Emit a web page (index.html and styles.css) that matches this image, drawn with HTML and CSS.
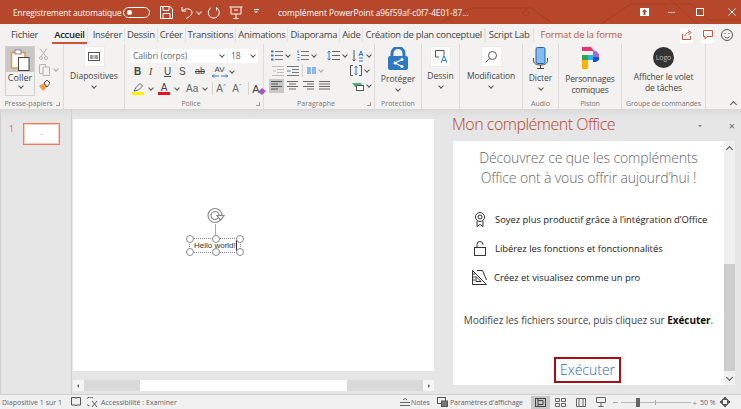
FILE: index.html
```html
<!DOCTYPE html>
<html lang="fr">
<head>
    <meta charset="UTF-8">
    <title>PowerPoint</title>
    <link rel="stylesheet" href="styles.css">
</head>
<body>

<div class="window">

<!-- Title bar -->
<div class="titlebar">
    <svg class="title-decor" width="300" height="24" fill="none" stroke="#a33e24" stroke-width="1"><path d="M0 22 L30 8 H90 L110 22 M85 10 a3 3 0 1 0 .1 0 M160 24 L190 4 H250 L268 20 H300 M230 0 L256 24"/></svg>
    <span class="autosave">Enregistrement automatique</span>
    <span class="toggle"><i></i></span>
    <svg class="qa qa-save" width="13" height="13" fill="none" stroke="#fff"><path d="M.5.5H10L12.5 3V12.5H.5Z M3 .5V4.5H9V.5 M3 12.5V7.5H10V12.5"/></svg>
    <svg class="qa qa-undo" width="12" height="13" fill="none" stroke="#fff"><path d="M1 1V5H5 M1 5C4 2 10 2 11 6C11.500 9 8 11 5 12.500"/></svg>
    <span class="qa-chev"></span>
    <svg class="qa qa-redo" width="13" height="13" fill="none" stroke="#fff"><path d="M4 1.800A5.500 5.500 0 1 0 9.500 1.800M9.500 1V4.500"/></svg>
    <svg class="qa qa-show" width="14" height="13" fill="none" stroke="#fff"><path d="M.5 1H13.500 M2 1V8H12V1 M7 8V12 M4.500 12.500H9.500 M5 4H9"/></svg>
    <span class="qa-more"></span>
    <span class="doc-name">complément PowerPoint a96f59af-c0f7-4E01-87...</span>
    <div class="win-btns">
        <svg width="9" height="8"><rect width="9" height="8" fill="#fff"/><path d="M4.500 1L7 4H5.500V7H3.500V4H2Z" fill="#b7472a"/></svg>
        <svg width="7" height="8" fill="none" stroke="#e8c7bb"><path d="M0 4.500H7"/></svg>
        <svg class="wb-max" width="8" height="8" fill="none" stroke="#fff"><rect x=".5" y=".5" width="7" height="7"/></svg>
        <svg class="wb-close" width="8" height="8" fill="none" stroke="#fff"><path d="M.5.5L7.500 7.500M7.500.5L.5 7.500"/></svg>
    </div>
</div>

<!-- Tabs -->
<div class="tabs">
    <span class="tab tab-file">Fichier</span>
    <span class="tab tab-active">Accueil</span>
    <span class="tab">Insérer</span>
    <span class="tab">Dessin</span>
    <span class="tab">Créer</span>
    <span class="tab">Transitions</span>
    <span class="tab">Animations</span>
    <span class="tab">Diaporama</span>
    <span class="tab">Aide</span>
    <span class="tab">Création de plan conceptuel</span>
    <span class="tab tab-sep">Script Lab</span>
    <span class="tab tab-format">Format de la forme</span>
    <div class="tab-tools">
        <span class="tool-box"><svg width="10" height="10" fill="none" stroke="#c8553a"><path d="M.5 4V9.500H8.500V6 M3 6C3.500 3.500 5 2.500 7 2.500M6 .5L9 2.500L6.500 5"/></svg></span>
        <span class="tool-box"><svg width="10" height="10" fill="none" stroke="#c8553a"><path d="M.5.5H9.500V6.500H4L2 9V6.500H.5Z"/></svg></span>
        <svg class="smiley" width="12" height="12" fill="none" stroke="#555"><circle cx="6" cy="6" r="5.500"/><path d="M3.500 7.500C5 9.500 7 9.500 8.500 7.500M4 4V5M8 4V5"/></svg>
    </div>
</div>

<!-- Ribbon -->
<div class="ribbon">
    <div class="group g-clip">
        <div class="group-body clip">
            <div class="paste">
                <div class="paste-top">
                    <svg width="20" height="22" fill="none"><path d="M1.500 3.500H15V19H1.500Z" fill="#fff" stroke="#e8973e" stroke-width="1.500"/><rect x="5" y="1" width="6" height="4" fill="#fff" stroke="#888"/><rect x="8.500" y="8.500" width="10.500" height="13" fill="#fff" stroke="#444"/></svg>
                </div>
                <span class="paste-label">Coller</span>
                <span class="chev"></span>
            </div>
            <div class="clip-tools">
                <svg width="9" height="12" fill="none" stroke="#b5b5b5"><path d="M1 .5L6.500 8M8 .5L2.500 8"/><circle cx="2" cy="10" r="1.500"/><circle cx="7" cy="10" r="1.500"/></svg>
                <div class="clip-copy">
                    <svg width="11" height="12" fill="none" stroke="#b5b5b5"><path d="M.5.5H6.500V9.500H.5Z"/><path d="M4 3H10.500V11.500H4Z" fill="#f3f2f1"/></svg>
                    <span class="chev chev-light"></span>
                </div>
                <svg width="11" height="11"><path d="M0 6L5 3L8 7L4 11Z" fill="#f0a04a"/><path d="M5 3L8 0L11 3L8 7Z" fill="none" stroke="#555"/></svg>
            </div>
        </div>
        <div class="group-label has-launcher">Presse-papiers<i class="launcher"></i></div>
    </div>

    <div class="group g-slides">
        <div class="group-body big">
            <span class="icon-box"><svg width="12" height="9" fill="#fff" stroke="#555"><rect x=".5" y=".5" width="11" height="8"/><path d="M2 3V7H5.500V3ZM6.500 3V7H10V3Z" fill="#999" stroke="none"/></svg></span>
            <span class="big-label">Diapositives</span>
            <span class="chev"></span>
        </div>
        <div class="group-label"></div>
    </div>

    <div class="group g-font">
        <div class="group-body font">
            <div class="font-selects">
                <span class="select sel-name">Calibri (corps)<span class="chev"></span></span>
                <span class="select sel-size">18<span class="chev"></span></span>
            </div>
            <div class="font-row row-fmt">
                <b class="fmt">B</b>
                <i class="fmt fmt-i">I</i>
                <u class="fmt">U</u>
                <span class="fmt fmt-s">S</span>
                <s class="fmt fmt-ab">ab</s>
                <span class="fmt-av">AV<svg width="16" height="4" fill="none" stroke="#2b7cd3"><path d="M0 2H7M2 .5L.5 2L2 3.500M9 2H16M14 .5L15.500 2L14 3.500"/></svg></span>
                <span class="chev"></span>
            </div>
            <div class="font-row row-color">
                <span class="color"><svg width="11" height="9" fill="none" stroke="#666"><path d="M1 8L3 4.500L7 .5L9.500 3L5.500 7Z"/></svg><em class="bar-yellow"></em></span>
                <span class="chev"></span>
                <span class="color color-a">A<em class="bar-red"></em></span>
                <span class="chev"></span>
                <span class="fmt-aa">Aa</span><span class="chev"></span>
                <span class="vsep"></span>
                <span class="fmt-grow">A<sup>^</sup></span>
                <span class="fmt-grow">A<sup>ˇ</sup></span>
                <span class="vsep"></span>
                <span class="fmt-clear">A<svg width="8" height="7"><path d="M0 4L4 0L8 3L4 7Z" fill="#a259c4"/></svg></span>
            </div>
        </div>
        <div class="group-label has-launcher">Police<i class="launcher"></i></div>
    </div>

    <div class="group g-para">
        <div class="group-body para">
            <div class="para-row">
                <svg class="pm-a" width="12" height="11" fill="none" stroke="#777"><path d="M4 1.500H12M4 5.500H12M4 9.500H12"/><path d="M0 .5H2.500V2.500H0ZM0 4.500H2.500V6.500H0ZM0 8.500H2.500V10.500H0Z" fill="#2b7cd3" stroke="none"/></svg><span class="chev"></span>
                <svg class="pm-b" width="12" height="11" fill="none" stroke="#777"><path d="M4 1.500H12M4 5.500H12M4 9.500H12"/><path d="M1 .5V3M.5 4.500H2.500M.5 7.500H2.500M.5 10H2.500" stroke="#2b7cd3"/></svg><span class="chev"></span>
                <svg class="pm-c" width="13" height="11" fill="none" stroke="#666"><path d="M5 1.500H13M5 5.500H13M5 9.500H13"/><path d="M2 1V10M.5 2.500L2 1L3.500 2.500M.5 8.500L2 10L3.500 8.500" stroke="#2b7cd3"/></svg><span class="chev"></span>
                <svg class="pm-d" width="12" height="12" fill="none" stroke="#555"><path d="M2 0V11M.5 9.500L2 11L3.500 9.500"/><path d="M7 6L9 1L11 6M7.500 4.500H10.500M7 8H11M7 11H11" stroke="#2b7cd3"/></svg><span class="chev"></span>
            </div>
            <div class="para-row">
                <svg class="pm-e" width="12" height="10" fill="none" stroke="#bbb"><path d="M0 .5H12M5 3.500H12M5 6.500H12M0 9.500H12M4 5H1"/></svg>
                <svg class="pm-f" width="12" height="10" fill="none" stroke="#777"><path d="M0 .5H12M5 3.500H12M5 6.500H12M0 9.500H12"/><path d="M0 5H3.500" stroke="#2b7cd3"/></svg>
                <span class="vsep"></span>
                <svg width="9" height="7"><path d="M0 0H4V7H0ZM5 0H9V7H5Z" fill="#8ab8e8"/></svg><span class="chev chev-light"></span>
                <svg class="pm-g" width="12" height="11" fill="none" stroke="#555"><path d="M3 .5H.5V10.500H3M9 .5H11.500V10.500H9"/><path d="M6 1V10M4.500 2.500L6 1L7.500 2.500M4.500 8.500L6 10L7.500 8.500" stroke="#2b7cd3"/></svg><span class="chev"></span>
            </div>
            <div class="para-row">
                <span class="align align-on"><svg width="11" height="9" fill="none" stroke="#555"><path d="M0 .5H11M0 3H7M0 5.500H11M0 8H7"/></svg></span>
                <span class="align"><svg width="11" height="9" fill="none" stroke="#666"><path d="M0 .5H11M2 3H9M0 5.500H11M2 8H9"/></svg></span>
                <span class="align"><svg width="11" height="9" fill="none" stroke="#666"><path d="M0 .5H11M4 3H11M0 5.500H11M4 8H11"/></svg></span>
                <span class="align"><svg width="11" height="9" fill="none" stroke="#666"><path d="M0 .5H11M0 3H11M0 5.500H11M0 8H11"/></svg></span>
                <svg class="pm-h" width="12" height="10"><path d="M0 2H9L11 6H3Z" fill="#4caf7d"/><rect x="4.500" y="4.500" width="7" height="5" fill="#fff" stroke="#555"/></svg><span class="chev"></span>
            </div>
        </div>
        <div class="group-label has-launcher">Paragraphe<i class="launcher"></i></div>
    </div>

    <div class="group g-prot">
        <div class="group-body big big-tall">
            <svg class="big-icon" width="20" height="23"><path d="M4 11V6.500A6 6 0 0 1 16 6.500V11" fill="none" stroke="#2f78c4" stroke-width="3"/><rect y="9" width="20" height="14" rx="2" fill="#2f78c4"/><path d="M14 12.500L7 16L14 19.500" fill="none" stroke="#fff" stroke-width="1.200"/><circle cx="14" cy="12.500" r="1.500" fill="#fff"/><circle cx="7" cy="16" r="1.500" fill="#fff"/><circle cx="14" cy="19.500" r="1.500" fill="#fff"/></svg>
            <span class="big-label">Protéger</span>
            <span class="chev"></span>
        </div>
        <div class="group-label">Protection</div>
    </div>

    <div class="group g-draw">
        <div class="group-body big">
            <span class="icon-box"><svg width="12" height="15" fill="none" stroke="#555"><path d="M.5 1.500H9V6M.5 1.500V8H4"/><path d="M6 14L9 6.500L12 14M7 11.500H11" stroke="#2b7cd3"/></svg></span>
            <span class="big-label">Dessin</span>
            <span class="chev"></span>
        </div>
        <div class="group-label"></div>
    </div>

    <div class="group g-edit">
        <div class="group-body big">
            <span class="icon-box"><svg width="12" height="12" fill="none" stroke="#555"><circle cx="7.500" cy="4.500" r="4"/><path d="M4.500 7.500L.5 11.500"/></svg></span>
            <span class="big-label">Modification</span>
            <span class="chev"></span>
        </div>
        <div class="group-label"></div>
    </div>

    <div class="group g-audio">
        <div class="group-body big big-tall">
            <svg class="big-icon" width="15" height="22" fill="none"><rect x="3" y=".5" width="9" height="16" rx="1.500" fill="#85bdee" stroke="#2060a8"/><path d="M.5 11V13C.5 16.500 3 18 7.500 18S14.500 16.500 14.500 13V11M7.500 18V21M4 21.500H11" stroke="#444"/></svg>
            <span class="big-label">Dicter</span>
            <span class="chev"></span>
        </div>
        <div class="group-label">Audio</div>
    </div>

    <div class="group g-comic">
        <div class="group-body big big-tall">
            <svg class="big-icon" width="17" height="23"><path d="M0 0H9L12 4H0Z" fill="#e8336d"/><path d="M11 4H14L17 7V10H11Z" fill="#a06ad8"/><path d="M0 8H6V13H0Z" fill="#2aa84a"/><path d="M6 8H11V13H6Z" fill="#29b6e8"/><path d="M11 10H17V13L14 15H11Z" fill="#1c50c8"/><path d="M0 13H6V22H0Z" fill="#f8b400"/></svg>
            <span class="big-label">Personnages<br>comiques</span>
        </div>
        <div class="group-label">Piston</div>
    </div>

    <div class="group g-cmd">
        <div class="group-body big big-tall">
            <span class="logo">Logo</span>
            <span class="big-label">Afficher le volet<br>de tâches</span>
        </div>
        <div class="group-label">Groupe de commandes</div>
    </div>

    <div class="group g-end">
        <span class="collapse"></span>
    </div>
</div>
<div class="ribbon-shadow"></div>

<!-- Main area -->
<div class="main">
    <div class="thumbs">
        <span class="thumb-num">1</span>
        <div class="thumb"><span></span></div>
    </div>

    <div class="editor">
        <div class="canvas">
            <div class="shape">
                <svg class="rotate" width="18" height="17" fill="none" stroke="#8a8a8a" stroke-width="1.200"><circle cx="8" cy="8.500" r="7"/><circle cx="8" cy="8.500" r="4"/><path d="M10 8.500H17L13.500 13Z" fill="#fff"/></svg>
                <span class="stem"></span>
                <div class="box">
                    <span class="hello">Hello world!</span><span class="caret"></span>
                    <i class="handle h-tl"></i><i class="handle h-tc"></i><i class="handle h-tr"></i>
                    <i class="handle h-bl"></i><i class="handle h-bc"></i><i class="handle h-br"></i>
                </div>
            </div>
        </div>
        <div class="hscroll">
            <span class="hs-btn"><em class="arrow-l"></em></span>
            <div class="hs-track"><span class="hs-thumb"></span></div>
            <span class="hs-btn"><em class="arrow-r"></em></span>
        </div>
    </div>

    <div class="taskpane">
        <div class="pane-head">
            <span class="pane-title">Mon complément Office</span>
            <span class="pane-menu"></span>
            <span class="pane-close">×</span>
        </div>
        <div class="pane-frame">
            <div class="pane-body">
                <h2 class="pane-h">Découvrez ce que les compléments<br>Office ont à vous offrir aujourd’hui !</h2>
                <ul class="features">
                    <li><svg class="feat-ico" width="12" height="15" fill="none" stroke="#333"><circle cx="6" cy="5" r="4.500"/><circle cx="6" cy="5" r="2"/><path d="M3 9V14.500L6 12.500L9 14.500V9"/></svg>Soyez plus productif grâce à l’intégration d’Office</li>
                    <li><svg class="feat-ico" width="12" height="15" fill="none" stroke="#333"><rect x=".5" y="6.500" width="11" height="8"/><path d="M3 6.500V3.500A3 3 0 0 1 9 3.500V4"/></svg>Libérez les fonctions et fonctionnalités</li>
                    <li><svg class="feat-ico-wide" width="15" height="15" fill="none" stroke="#333"><path d="M.5.5L14.500 14.500H.5Z M.5 4H3M.5 7H3M.5 10H3 M4 11.500H9L4 6.500Z M5 .5H10.500L14.500 10"/></svg>Créez et visualisez comme un pro</li>
                </ul>
                <p class="pane-hint">Modifiez les fichiers source, puis cliquez sur <b>Exécuter</b>.</p>
                <div class="run-wrap"><span class="run">Exécuter</span></div>
            </div>
            <div class="vscroll">
                <span class="vs-up"></span>
                <span class="vs-thumb"></span>
                <span class="vs-down"></span>
            </div>
        </div>
    </div>
</div>

<!-- Status bar -->
<div class="status">
    <span class="st-slide">Diapositive 1 sur 1</span>
    <svg class="st-book" width="10" height="10" fill="none" stroke="#555"><path d="M.5.5H4.500L5 1.500L5.500.5H9.500V8H5.500L5 9L4.500 8H.5Z"/></svg>
    <svg class="st-acc" width="11" height="11" fill="none" stroke="#555"><path d="M6 1A4.500 4.500 0 1 0 2.500 9"/><path d="M5 4L10 10M10 4L5 10"/></svg>
    <span class="st-acc-text">Accessibilité : Examiner</span>
    <span class="st-notes"><svg width="10" height="8" fill="none" stroke="#666"><path d="M0 4.500H10M0 7.500H10M3 2L5 .5L7 2"/></svg>Notes</span>
    <span class="st-params"><svg width="11" height="10" fill="none" stroke="#555"><rect x=".5" y=".5" width="8" height="6"/><rect x="4.500" y="4" width="6" height="5.500" fill="#777"/></svg>Paramètres d'affichage</span>
    <span class="view view-on"><svg width="11" height="9" fill="none" stroke="#444"><rect x=".5" y=".5" width="10" height="8"/><path d="M3 1V8M3 2.500H8V6.500H3"/></svg></span>
    <span class="view"><svg width="11" height="9" fill="none" stroke="#666"><path d="M.5.5H4.500V3.500H.5ZM6.500.5H10.500V3.500H6.500ZM.5 5.500H4.500V8.500H.5ZM6.500 5.500H10.500V8.500H6.500Z"/></svg></span>
    <span class="view"><svg width="10" height="9" fill="none" stroke="#666"><path d="M.5.5H9.500V8.500H.5ZM3 .5V8.500M7 .5V8.500"/></svg></span>
    <span class="view"><svg width="10" height="10" fill="none" stroke="#666"><path d="M.5.5H9.500V5.500H.5ZM5 5.500V9M2.500 9.500H7.500"/></svg></span>
    <div class="zoom">
        <span class="zoom-minus"></span>
        <div class="zoom-track"><span class="zoom-thumb"></span><span class="zoom-mid"></span></div>
        <span class="zoom-plus">+</span>
    </div>
    <span class="zoom-val">50 %</span>
    <svg class="st-fit" width="10" height="10" fill="none" stroke="#555"><rect x="2.500" y="2.500" width="5" height="5"/><path d="M5 0L3.500 1.500H6.500ZM5 10L3.500 8.500H6.500ZM0 5L1.500 3.500V6.500ZM10 5L8.500 3.500V6.500Z"/></svg>
</div>

</div>

</body>
</html>
```

FILE: styles.css
```css
html, body {
    margin: 0;
    height: 100%;
    overflow: hidden;
}
body {
    font-family: "Open Sans", "Noto Sans", sans-serif;
    background-color: #e6e6e6;
    color: #444;
}
.window {
    width: 741px;
    height: 409px;
    display: flex;
    flex-direction: column;
}
.chev {
    display: inline-block;
    width: 3px;
    height: 3px;
    border-right: 1px solid #555;
    border-bottom: 1px solid #555;
    transform: rotate(45deg);
    margin: 0 3px 2px 4px;
    flex: none;
}
.chev-light {
    border-color: #aaa;
}
.vsep {
    width: 1px;
    height: 13px;
    background-color: #d4d4d4;
    flex: none;
}

/* title bar */
.titlebar {
    height: 24px;
    background-color: #b7472a;
    display: flex;
    align-items: center;
    color: #fff;
    position: relative;
    flex: none;
}
.title-decor {
    position: absolute;
    right: 0;
    top: 0;
}
.autosave {
    font-size: 8.3px;
    letter-spacing: -.12px;
    margin-left: 13px;
    width: 108px;
    white-space: nowrap;
}
.toggle {
    width: 27px;
    height: 11px;
    border: 1px solid #fff;
    border-radius: 7px;
    box-sizing: border-box;
    margin-left: 2px;
    display: flex;
    align-items: center;
}
.toggle i {
    width: 5px;
    height: 5px;
    border-radius: 50%;
    background-color: #fff;
    margin-left: 3px;
}
.qa {
    flex: none;
    position: relative;
}
.qa-save { margin-left: 10px; }
.qa-undo { margin-left: 8px; }
.qa-chev {
    width: 3px;
    height: 3px;
    border-right: 1px solid #fff;
    border-bottom: 1px solid #fff;
    transform: rotate(45deg);
    margin-left: 4px;
}
.qa-redo { margin-left: 6px; }
.qa-show { margin-left: 9px; }
.qa-more {
    width: 5px;
    height: 5px;
    margin-left: 11px;
    border-top: 1px solid #fff;
    position: relative;
}
.qa-more::after {
    content: "";
    position: absolute;
    top: 1px;
    left: 0;
    border: 2.5px solid transparent;
    border-top-color: #fff;
}
.doc-name {
    font-size: 8.3px;
    margin-left: 19px;
    white-space: nowrap;
    position: relative;
}
.win-btns {
    position: absolute;
    right: 5px;
    top: 8px;
    display: flex;
    align-items: center;
    gap: 19px;
}
.wb-max { margin-left: 2px; }
.wb-close { margin-left: 5px; }

/* tabs */
.tabs {
    height: 20px;
    padding-top: 2px;
    box-sizing: border-box;
    background-color: #f3f2f1;
    display: flex;
    align-items: center;
    font-size: 9.5px;
    color: #444;
    flex: none;
}
.tab {
    white-space: nowrap;
    padding: 0 2px;
    line-height: 14px;
    border-right: 1px solid #e2e2e2;
    position: relative;
    letter-spacing: -.3px;
}
.tab-file {
    margin-left: 9px;
    margin-right: 12px;
    border-right: 0;
}
.tab-active {
    color: #222;
    font-weight: 600;
    margin-right: 3px;
}
.tab-active::after {
    content: "";
    position: absolute;
    left: 0;
    right: 0;
    bottom: -2px;
    height: 2px;
    background-color: #c8553a;
}
.tab-sep {
    padding: 0 3px;
    border-left: 1px solid #e2e2e2;
}
.tab-format {
    color: #c0583c;
    border-right: 0;
    margin-left: 5px;
    letter-spacing: -.2px;
}
.tab-tools {
    margin-left: auto;
    display: flex;
    align-items: center;
    gap: 8px;
    padding-right: 8px;
}
.tool-box {
    width: 13px;
    height: 15px;
    background-color: #fff;
    display: flex;
    align-items: center;
    justify-content: center;
}
.smiley {
    margin-left: -1px;
}

/* ribbon */
.ribbon {
    height: 65px;
    background-color: #f3f2f1;
    display: flex;
    flex: none;
}
.ribbon-shadow {
    height: 1px;
    background-color: #d8d8d8;
    flex: none;
}
.group {
    border-right: 1px solid #dcdcdc;
    display: flex;
    flex-direction: column;
    box-sizing: border-box;
    flex: none;
}
.group-body {
    flex: 1;
    min-height: 0;
}
.group-label {
    height: 11px;
    line-height: 11px;
    font-size: 7px;
    color: #777;
    text-align: center;
    position: relative;
    white-space: nowrap;
}
.has-launcher {
    padding-right: 6px;
}
.launcher {
    position: absolute;
    right: 3px;
    top: 4px;
    width: 3px;
    height: 3px;
    border-right: 1px solid #999;
    border-bottom: 1px solid #999;
}
.g-clip { width: 64px; }
.g-slides { width: 61px; }
.g-font { width: 139px; }
.g-para { width: 111px; }
.g-prot { width: 47px; }
.g-draw { width: 38px; }
.g-edit { width: 63px; letter-spacing: -.1px; }
.g-audio { width: 36px; }
.g-comic { width: 63px; letter-spacing: -.15px; }
.g-cmd { width: 84px; letter-spacing: -.1px; }
.g-end {
    flex: 1;
    border-right: 0;
    position: relative;
}
.collapse {
    position: absolute;
    right: 5px;
    bottom: 2px;
    width: 4px;
    height: 4px;
    border-left: 1px solid #555;
    border-top: 1px solid #555;
    transform: rotate(45deg);
}
.clip {
    display: flex;
    padding: 2px 0 0 5px;
}
.paste {
    width: 30px;
    height: 50px;
    border: 1px solid #d0d0d0;
    box-sizing: border-box;
    display: flex;
    flex-direction: column;
    align-items: center;
}
.paste-top {
    width: 100%;
    height: 25px;
    background-color: #c8c8c8;
    display: flex;
    align-items: center;
    justify-content: center;
    flex: none;
}
.paste-label {
    font-size: 9px;
    line-height: 13px;
    margin-top: -1px;
}
.clip-tools {
    display: flex;
    flex-direction: column;
    align-items: flex-start;
    gap: 4px;
    padding: 2px 0 0 4px;
}
.clip-copy {
    display: flex;
    align-items: center;
}
.big {
    display: flex;
    flex-direction: column;
    align-items: center;
    padding-top: 2px;
}
.big-tall {
    padding-top: 3px;
}
.icon-box {
    width: 21px;
    height: 21px;
    background-color: #fff;
    border: 1px solid #ececec;
    box-sizing: border-box;
    display: flex;
    align-items: center;
    justify-content: center;
    flex: none;
}
.big-icon {
    flex: none;
}
.big-label {
    font-size: 8.5px;
    line-height: 11px;
    text-align: center;
    margin-top: 3px;
    white-space: nowrap;
}
.big .chev {
    margin: 3px 0 0;
}
.font {
    padding: 5px 0 0 5px;
}
.font-selects {
    display: flex;
    gap: 1px;
}
.select {
    height: 14px;
    background-color: #fff;
    font-size: 8.5px;
    line-height: 14px;
    color: #666;
    padding-left: 3px;
    box-sizing: border-box;
    display: flex;
    align-items: center;
    justify-content: space-between;
}
.sel-name { width: 97px; }
.sel-size { width: 30px; }
.font-row {
    display: flex;
    align-items: center;
    height: 17px;
}
.row-fmt {
    padding-left: 4px;
    font-size: 10px;
    font-family: "Liberation Sans", sans-serif;
}
.fmt {
    width: 15px;
    font-size: 10px;
    color: #444;
    line-height: 13px;
    flex: none;
    text-align: left;
}
.fmt-i {
    font-family: "Liberation Serif", serif;
}
.fmt-s {
    width: 16px;
}
.fmt-ab {
    width: 16px;
    font-size: 9px;
}
.fmt-av {
    display: flex;
    flex-direction: column;
    align-items: center;
    font-size: 8px;
    line-height: 8px;
    width: 17px;
}
.row-fmt .chev {
    margin-left: 2px;
}
.color {
    width: 12px;
    display: flex;
    flex-direction: column;
    align-items: center;
    font-size: 10px;
    line-height: 9px;
    flex: none;
}
.color em {
    width: 12px;
    height: 3px;
    display: block;
}
.bar-yellow { background-color: #ffef00; }
.bar-red { background-color: #e81123; }
.row-color {
    gap: 3px;
    padding-left: 2px;
    font-family: "Liberation Sans", sans-serif;
}
.row-color .chev {
    margin: 0 2px 2px 2px;
}
.fmt-aa {
    font-size: 10px;
    margin-left: 2px;
    color: #666;
}
.fmt-grow {
    font-size: 10px;
    color: #666;
    width: 13px;
    flex: none;
}
.fmt-grow sup {
    font-size: 6px;
    color: #2b7cd3;
    line-height: 0;
}
.fmt-clear {
    font-size: 11px;
    display: flex;
    align-items: flex-end;
}
.fmt-clear svg {
    margin-left: -2px;
}
.para {
    padding: 4px 0 0 5px;
}
.para-row {
    display: flex;
    align-items: center;
    height: 15px;
}
.para-row .chev {
    margin: 0 3px 2px 3px;
}
.pm-a { margin-left: 2px; }
.pm-b { margin-left: 4px; }
.pm-c { margin-left: 8px; }
.pm-d { margin-left: 2px; }
.pm-e { margin-left: 3px; }
.pm-f { margin-left: 3px; }
.pm-g { margin-left: 24px; }
.pm-h { margin-left: 19px; }
.para-row .vsep {
    margin: 0 4px 0 3px;
}
.align {
    width: 15px;
    height: 14px;
    display: flex;
    align-items: center;
    justify-content: center;
    margin-right: 1px;
    flex: none;
}
.align-on {
    background-color: #c8c8c8;
}
.logo {
    width: 21px;
    height: 21px;
    border-radius: 50%;
    background-color: #333;
    color: #bbb;
    font-size: 7px;
    line-height: 21px;
    text-align: center;
    flex: none;
}

/* main */
.main {
    flex: 1;
    display: flex;
    min-height: 0;
    background-color: #e6e6e6;
    background-image: linear-gradient(#dcdcdc, #e6e6e6 8px);
}
.thumbs {
    width: 72px;
    border-right: 1px solid #cfcfcf;
    border-left: 1px solid #cfcfcf;
    box-sizing: border-box;
    display: flex;
    align-items: flex-start;
    padding: 13px 0 0 8px;
    flex: none;
}
.thumb-num {
    font-size: 9px;
    line-height: 11px;
    color: #d9694a;
    width: 14px;
}
.thumb {
    width: 37px;
    height: 22px;
    background-color: #fff;
    border: 1px solid #ee7d5e;
    box-shadow: inset 0 0 0 1px #f9c9ba;
    box-sizing: border-box;
    display: flex;
    align-items: center;
    justify-content: center;
}
.thumb span {
    width: 4px;
    height: 1px;
    background-color: #ddd;
}
.editor {
    width: 373px;
    display: flex;
    flex-direction: column;
    flex: none;
    padding: 9px 11px 0 1px;
    box-sizing: border-box;
}
.canvas {
    width: 361px;
    height: 252px;
    background-color: #fff;
    position: relative;
}
.shape {
    position: absolute;
    left: 116px;
    top: 88px;
    width: 52px;
}
.rotate {
    display: block;
    margin-left: 18px;
}
.stem {
    display: block;
    width: 1px;
    height: 14px;
    background-color: #aaa;
    margin: 0 0 0 26px;
}
.box {
    height: 15px;
    border: 1px dotted #888;
    box-sizing: border-box;
    position: relative;
    font-family: "Liberation Sans", sans-serif;
    font-size: 8px;
    color: #333;
    line-height: 14px;
    padding-left: 4px;
    white-space: nowrap;
}
.hello {
    display: inline-block;
}
.caret {
    position: absolute;
    right: 3px;
    top: 1px;
    width: 1px;
    height: 11px;
    background-color: #333;
}
.handle {
    position: absolute;
    width: 6px;
    height: 6px;
    border: 1px solid #8a8a8a;
    border-radius: 50%;
    background-color: #fff;
}
.h-tl { left: -4px; top: -4px; }
.h-tc { left: 22px; top: -4px; }
.h-tr { right: -4px; top: -4px; }
.h-bl { left: -4px; bottom: -4px; }
.h-bc { left: 22px; bottom: -4px; }
.h-br { right: -4px; bottom: -4px; }
.hscroll {
    height: 11px;
    margin-top: 9px;
    display: flex;
    background-color: #d9d9d9;
}
.hs-btn {
    width: 11px;
    background-color: #f5f5f5;
    display: flex;
    align-items: center;
    justify-content: center;
    flex: none;
}
.hs-btn em {
    border: 2.5px solid transparent;
}
.arrow-l {
    border-right-color: #666 !important;
    margin-left: -3px;
}
.arrow-r {
    border-left-color: #666 !important;
    margin-right: -3px;
}
.hs-track {
    flex: 1;
    display: flex;
    justify-content: flex-start;
}
.hs-thumb {
    width: 207px;
    margin-left: 56px;
    background-color: #fff;
}
.taskpane {
    flex: 1;
    display: flex;
    flex-direction: column;
    padding-left: 8px;
    min-width: 0;
}
.pane-head {
    height: 31px;
    display: flex;
    align-items: center;
    position: relative;
    flex: none;
}
.pane-title {
    font-size: 16px;
    color: #b7472a;
    font-weight: 300;
    letter-spacing: -.5px;
    white-space: nowrap;
    flex: 1;
    margin: -4px 0 0 -1px;
}
.pane-menu {
    border: 2px solid transparent;
    border-top-color: #777;
    margin: 0 27px 0 0;
    position: relative;
    top: 1px;
}
.pane-close {
    font-size: 11px;
    color: #666;
    margin-right: 6px;
    line-height: 10px;
}
.pane-frame {
    width: 282px;
    height: 244px;
    background-color: #fff;
    display: flex;
    flex: none;
}
.pane-body {
    flex: 1;
    min-width: 0;
    display: flex;
    flex-direction: column;
}
.pane-h {
    margin: 7px 0 0;
    font-size: 14px;
    line-height: 20px;
    font-weight: 300;
    color: #666;
    text-align: center;
    white-space: nowrap;
    letter-spacing: -.15px;
}
.features {
    list-style: none;
    margin: 17px 0 0;
    padding: 0 0 0 19px;
    font-size: 9.4px;
    color: #222;
}
.features li {
    height: 29px;
    display: flex;
    align-items: center;
    white-space: nowrap;
}
.feat-ico {
    margin: 0 9px 0 2px;
    flex: none;
}
.feat-ico-wide {
    margin-right: 7px;
    flex: none;
}
.pane-hint {
    margin: 21px 0 0;
    font-size: 10px;
    color: #444;
    text-align: center;
    white-space: nowrap;
    letter-spacing: -.05px;
}
.pane-hint b {
    color: #111;
}
.run-wrap {
    text-align: center;
    margin-top: 30px;
    padding-right: 2px;
}
.run {
    display: inline-block;
    border: 2px solid #a80f14;
    font-size: 14px;
    line-height: 22px;
    color: #2b6cb0;
    padding: 0 4px;
    font-weight: 300;
}
.vscroll {
    width: 11px;
    background-color: #f0f0f0;
    position: relative;
    flex: none;
}
.vs-thumb {
    position: absolute;
    left: 0;
    right: 0;
    top: 123px;
    height: 107px;
    background-color: #cdcdcd;
}
.vs-up,
.vs-down {
    position: absolute;
    left: 3px;
    width: 4px;
    height: 4px;
    border-left: 1px solid #555;
    border-top: 1px solid #555;
    transform: rotate(45deg);
}
.vs-up { top: 6px; }
.vs-down {
    bottom: 5px;
    transform: rotate(225deg);
}

/* status bar */
.status {
    height: 15px;
    background-color: #f0f0f0;
    border-top: 1px solid #d0d0d0;
    box-sizing: border-box;
    display: flex;
    align-items: center;
    font-size: 7px;
    color: #666;
    flex: none;
    white-space: nowrap;
}
.st-slide { margin-left: 2px; width: 69px; }
.st-acc { margin-left: 6px; }
.st-acc-text { margin-left: 3px; width: 299px; }
.st-notes {
    display: flex;
    align-items: center;
    gap: 1px;
    letter-spacing: -.1px;
    width: 37px;
}
.st-params {
    display: flex;
    align-items: center;
    gap: 2px;
    letter-spacing: -.1px;
    width: 94px;
}
.view {
    width: 19px;
    height: 13px;
    display: flex;
    align-items: center;
    justify-content: center;
    margin-right: 1px;
}
.view-on {
    background-color: #c8c8c8;
}
.zoom {
    display: flex;
    align-items: center;
    margin-left: 2px;
    width: 84px;
}
.zoom-minus {
    width: 5px;
    height: 1px;
    background-color: #aaa;
    margin-right: 3px;
}
.zoom-track {
    width: 71px;
    height: 1px;
    background-color: #bbb;
    position: relative;
}
.zoom-thumb {
    position: absolute;
    left: 15px;
    top: -4px;
    width: 4px;
    height: 9px;
    background-color: #666;
}
.zoom-mid {
    position: absolute;
    left: 34px;
    top: -2px;
    width: 1px;
    height: 5px;
    background-color: #aaa;
}
.zoom-plus {
    font-size: 8px;
    margin-left: 1px;
    color: #888;
}
.zoom-val {
    margin-left: 3px;
    width: 20px;
}
```
